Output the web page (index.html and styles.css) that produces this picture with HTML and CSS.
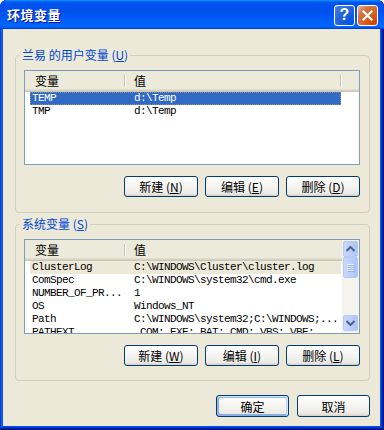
FILE: index.html
```html
<!DOCTYPE html>
<html lang="zh-CN">
<head>
  <meta charset="UTF-8">
  <meta name="viewport" content="width=device-width, initial-scale=1.0">
  <title>环境变量</title>
  <link rel="stylesheet" href="styles.css">
</head>
<body>
  <div class="window">
    <div class="titlebar">
      <span class="title">环境变量</span>
      <div class="title-buttons">
        <div class="tbtn tbtn-help">?</div>
        <div class="tbtn tbtn-close">
          <svg width="13" height="13" viewBox="0 0 13 13"><path d="M2.5 2.5 L10.5 10.5 M10.5 2.5 L2.5 10.5" stroke="#fff" stroke-width="2.2" stroke-linecap="square"/></svg>
        </div>
      </div>
    </div>

    <div class="client">
      <fieldset class="group">
        <legend>兰易 的用户变量 (<u>U</u>)</legend>
        <div class="list">
          <div class="list-main">
            <div class="list-head">
              <div class="col col-name">变量</div>
              <div class="col col-value">值</div>
              <div class="col col-fill"></div>
            </div>
            <div class="rows">
              <div class="row selected"><span class="cell cell-name">TEMP</span><span class="cell">d:\Temp</span></div>
              <div class="row"><span class="cell cell-name">TMP</span><span class="cell">d:\Temp</span></div>
            </div>
          </div>
        </div>
        <div class="btn-row">
          <button class="btn">新建 (<u>N</u>)</button>
          <button class="btn">编辑 (<u>E</u>)</button>
          <button class="btn">删除 (<u>D</u>)</button>
        </div>
      </fieldset>

      <fieldset class="group group-system">
        <legend>系统变量 (<u>S</u>)</legend>
        <div class="list">
          <div class="list-main">
            <div class="list-head">
              <div class="col col-name">变量</div>
              <div class="col col-last">值</div>
            </div>
            <div class="rows">
              <div class="row inactive"><span class="cell cell-name">ClusterLog</span><span class="cell">C:\WINDOWS\Cluster\cluster.log</span></div>
              <div class="row"><span class="cell cell-name">ComSpec</span><span class="cell">C:\WINDOWS\system32\cmd.exe</span></div>
              <div class="row"><span class="cell cell-name">NUMBER_OF_PR...</span><span class="cell">1</span></div>
              <div class="row"><span class="cell cell-name">OS</span><span class="cell">Windows_NT</span></div>
              <div class="row"><span class="cell cell-name">Path</span><span class="cell">C:\WINDOWS\system32;C:\WINDOWS;...</span></div>
              <div class="row"><span class="cell cell-name">PATHEXT</span><span class="cell">.COM;.EXE;.BAT;.CMD;.VBS;.VBE;...</span></div>
            </div>
          </div>
          <div class="scrollbar">
            <div class="sb-btn">
              <svg width="9" height="6" viewBox="0 0 9 6"><path d="M0.5 5 L4.5 1 L8.5 5" fill="none" stroke="#4d6185" stroke-width="2"/></svg>
            </div>
            <div class="sb-thumb"><span></span><span></span><span></span><span></span></div>
            <div class="sb-track"></div>
            <div class="sb-btn">
              <svg width="9" height="6" viewBox="0 0 9 6"><path d="M0.5 1 L4.5 5 L8.5 1" fill="none" stroke="#4d6185" stroke-width="2"/></svg>
            </div>
          </div>
        </div>
        <div class="btn-row">
          <button class="btn">新建 (<u>W</u>)</button>
          <button class="btn">编辑 (<u>I</u>)</button>
          <button class="btn">删除 (<u>L</u>)</button>
        </div>
      </fieldset>

      <div class="dialog-buttons">
        <button class="btn btn-default">确定</button>
        <button class="btn">取消</button>
      </div>
    </div>
  </div>
</body>
</html>
```

FILE: styles.css
```css
body {
  margin: 0;
  padding: 0;
  background-color: #fff;
  font-family: "Liberation Sans", "Noto Sans CJK SC", sans-serif;
  font-size: 12px;
}

.window {
  width: 384px;
  height: 430px;
  display: flex;
  flex-direction: column;
  box-sizing: border-box;
  padding: 0 4px 4px 3px;
  background-color: #0054e3;
  border-radius: 7px 7px 0 0;
  box-shadow: inset -1px -1px #00138c, inset 1px 1px #0831d9, inset -2px -2px #001ea0, inset 2px 2px #166aee, inset -3px -3px #003bda, inset 3px 3px #0855dd;
  overflow: hidden;
}

/* Title bar */
.titlebar {
  height: 29px;
  margin: 0 -4px 0 -3px;
  padding: 0 6px 0 7px;
  display: flex;
  align-items: center;
  justify-content: space-between;
  border-radius: 7px 7px 0 0;
  background: linear-gradient(180deg, #0997ff, #0053ee 8%, #0050ee 40%, #06f 88%, #06f 93%, #005bff 95%, #003dd7 96%, #003dd7);
}

.title {
  color: #fff;
  font-family: "Noto Sans CJK SC", sans-serif;
  font-weight: bold;
  font-size: 13px;
  letter-spacing: 0.5px;
  text-shadow: 1px 1px #0f1089;
}

.title-buttons {
  display: flex;
  gap: 2px;
  margin-top: 1px;
}

.tbtn {
  width: 21px;
  height: 21px;
  box-sizing: border-box;
  border: 1px solid #fff;
  border-radius: 3px;
  display: flex;
  align-items: center;
  justify-content: center;
}

.tbtn-help {
  background: radial-gradient(circle at 90% 90%, #0054e9 0%, #2263d5 55%, #4479e4 90%, #a4bef6 100%);
  color: #fff;
  font-family: "Liberation Sans", sans-serif;
  font-weight: bold;
  font-size: 16px;
}

.tbtn-close {
  background: radial-gradient(circle at 90% 90%, #cc4600 0%, #dc6527 55%, #cd7546 70%, #f0b8a0 100%);
}

/* Client area */
.client {
  flex: 1;
  background-color: #ece9d8;
  padding: 19px 10px 0 12px;
}

.group {
  margin: 0;
  padding: 8px 9px 15px 8px;
  border: 1px solid #d0d0bf;
  border-radius: 4px;
  min-width: 0;
}

.group-system {
  margin-top: 4px;
  padding-bottom: 14px;
}

.group legend {
  padding: 0 2px;
  margin-left: -4px;
  line-height: 14px;
  color: #0046d5;
  font-family: "Noto Sans CJK SC", sans-serif;
}

/* List view */
.list {
  height: 95px;
  box-sizing: border-box;
  border: 1px solid #7f9db9;
  background-color: #fff;
  display: flex;
  overflow: hidden;
}

.list-main {
  flex: 1;
  min-width: 0;
}

.list-head {
  display: flex;
  height: 21px;
  background-color: #ebeadb;
  box-shadow: inset 0 -1px #cbc7b8, inset 0 -2px #d6d2c2, inset 0 -3px #e2decd;
}

.col {
  position: relative;
  box-sizing: border-box;
  line-height: 19px;
  font-family: "Noto Sans CJK SC", sans-serif;
  color: #000;
}

.col-name {
  width: 100px;
  padding-left: 10px;
}

.col-value {
  width: 216px;
  padding-left: 9px;
}

.col-last {
  flex: 1;
  padding-left: 9px;
}

.col-fill {
  flex: 1;
}

.col-name::after,
.col-value::after {
  content: "";
  position: absolute;
  right: 0;
  top: 4px;
  bottom: 5px;
  width: 1px;
  background-color: #c7c5b2;
  box-shadow: 1px 0 #fff;
}

.rows {
  padding-left: 5px;
}

.row {
  display: flex;
  width: 311px;
  height: 13px;
  box-sizing: border-box;
  font-family: "Liberation Mono", monospace;
  font-size: 11px;
  letter-spacing: -0.6px;
  line-height: 13px;
  color: #000;
  white-space: nowrap;
}

.row.selected {
  background-color: #316ac5;
  color: #fff;
  outline: 1px dotted #8e8e8e;
  outline-offset: -1px;
}

.row.inactive {
  background-color: #ece9d8;
}

.cell {
  padding-left: 2px;
}

.cell-name {
  width: 100px;
  flex-shrink: 0;
}

/* Scrollbar */
.scrollbar {
  width: 17px;
  display: flex;
  flex-direction: column;
  background-color: #f4f3ee;
  padding: 1px 1px 2px 1px;
  box-sizing: border-box;
}

.sb-btn,
.sb-thumb {
  height: 16px;
  box-sizing: border-box;
  border: 1px solid #c3d3fd;
  border-radius: 2px;
  background: linear-gradient(90deg, #c9d7fb, #b9cdfa 60%, #aec4f7);
  display: flex;
  align-items: center;
  justify-content: center;
}

.sb-btn {
  border-color: #b6c9f4;
}

.sb-thumb {
  height: 21px;
  flex-direction: column;
  gap: 1px;
  border-color: #b6c9f4;
}

.sb-thumb span {
  width: 7px;
  height: 1px;
  background-color: #eef4fe;
  box-shadow: 1px 1px #8cb0f8;
}

.sb-track {
  flex: 1;
}

/* Buttons */
.btn-row,
.dialog-buttons {
  display: flex;
  justify-content: flex-end;
  gap: 7px;
  margin-top: 11px;
}

.dialog-buttons {
  margin-top: 14px;
  gap: 8px;
}

.btn {
  width: 74px;
  height: 21px;
  padding: 0;
  border: 1px solid #003c74;
  border-radius: 3px;
  background: linear-gradient(180deg, #fff, #ecebe6 86%, #d6d0c5);
  font-family: "Noto Sans CJK SC", sans-serif;
  font-size: 12px;
  line-height: 19px;
  color: #000;
}

.dialog-buttons .btn {
  width: 73px;
  height: 22px;
}

.btn-default {
  box-shadow: inset -1px 1px #cee7ff, inset 1px 2px #98b8ea, inset -2px 2px #bcd4f6, inset 1px -1px #89ade4, inset 2px -2px #89ade4;
}
```
